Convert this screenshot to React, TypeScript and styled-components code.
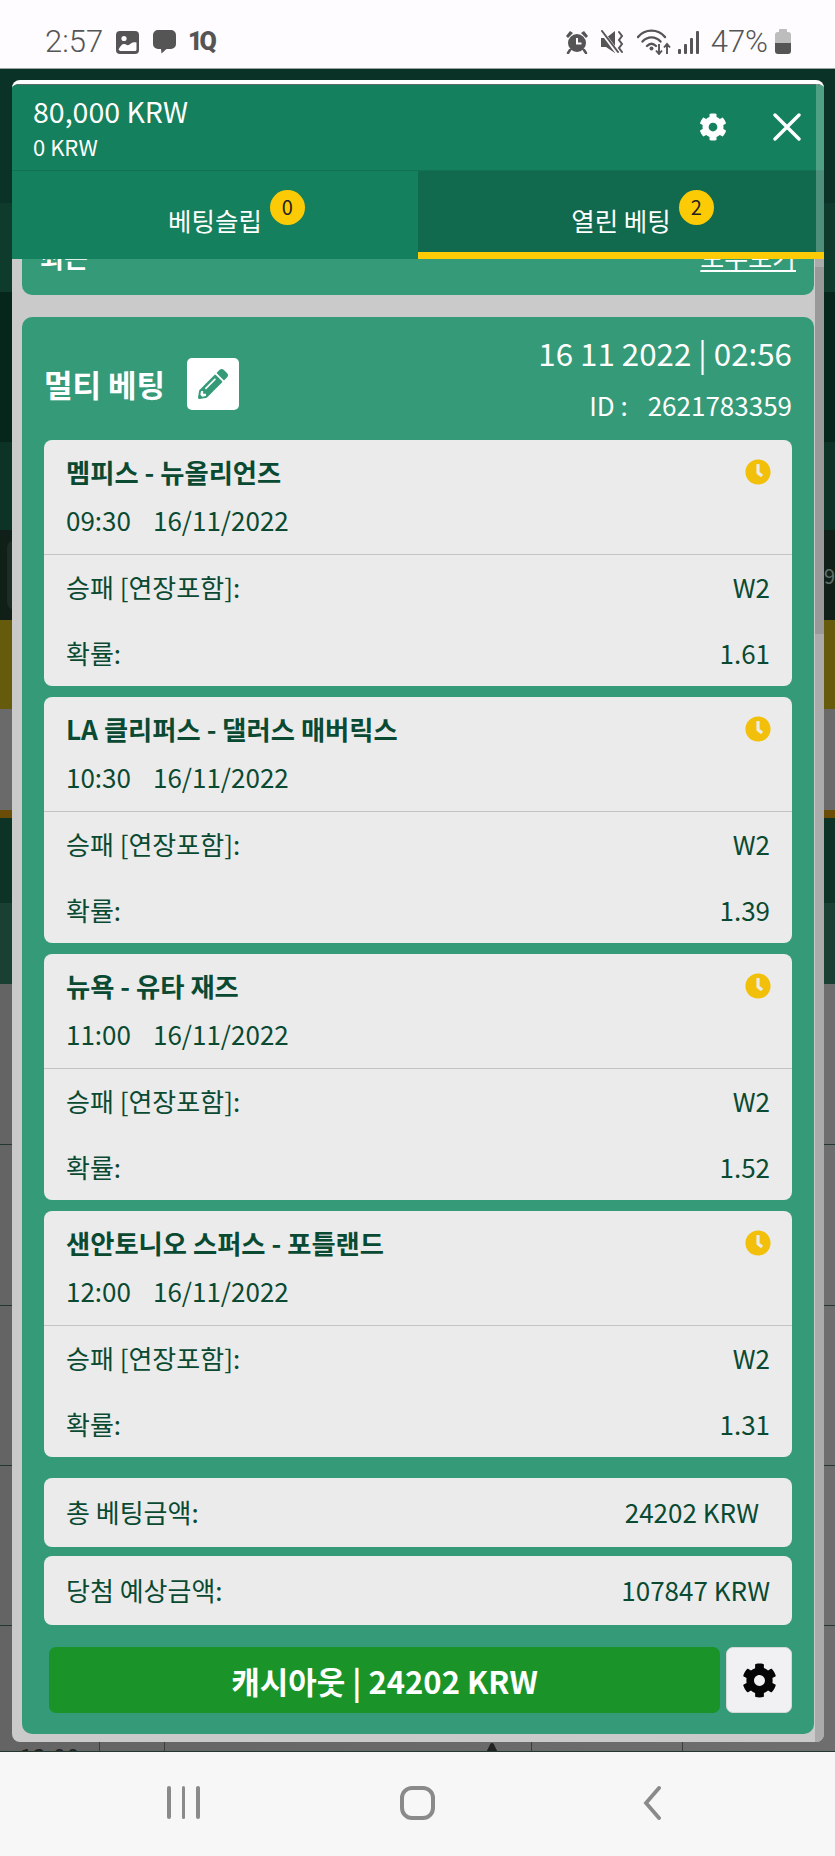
import React from "react";
import styled, { createGlobalStyle } from "styled-components";
import { FaClock, FaCog, FaPencilAlt, FaStar } from "react-icons/fa";

const FONT = `"Noto Sans CJK KR", "Noto Sans", sans-serif`;

const GlobalStyle = createGlobalStyle`
  html, body {
    margin: 0;
    padding: 0;
    background: #f7f7f7;
  }
  * {
    box-sizing: border-box;
  }
`;

const StPage = styled.div`
  display: flex;
  flex-direction: column;
  width: 835px;
  height: 1856px;
  overflow: hidden;
  font-family: ${FONT};
`;

/* status bar */
const StStatusBar = styled.div`
  display: flex;
  flex: 0 0 69px;
  align-items: center;
  justify-content: space-between;
  padding: 16px 44px 0 45px;
  border-bottom: 1px solid #9aa5a1;
  background: #fefcfe;
  color: #555555;
  font-family: Roboto, sans-serif;
`;

const StStatusGroup = styled.div`
  display: flex;
  align-items: center;
`;

const StClock = styled.span`
  margin-right: 13px;
  font-size: 31px;
  line-height: 30px;
  font-weight: 300;
`;

const StOneQ = styled.span`
  margin-left: 12px;
  font-size: 25px;
  line-height: 26px;
  font-weight: 900;
  letter-spacing: -3px;
`;

const StPercent = styled.span`
  margin: 0 7px 0 12px;
  font-size: 31px;
  line-height: 30px;
  font-weight: 300;
`;

const StBattery = styled.div`
  position: relative;
  width: 16px;
  height: 22px;
  margin-top: 2px;
  border-radius: 3px;
  background: linear-gradient(#bdbdbd 52%, #555555 52%);
  &::before {
    content: "";
    position: absolute;
    top: -3px;
    left: 4px;
    width: 8px;
    height: 3px;
    border-radius: 1px 1px 0 0;
    background: #bdbdbd;
  }
`;

/* page behind the modal */
const StStage = styled.div`
  position: relative;
  flex: 1;
`;

const StBand = styled.div<{ $h: number; $bg: string }>`
  display: flex;
  align-items: center;
  justify-content: space-between;
  height: ${({ $h }) => $h}px;
  background: ${({ $bg }) => $bg};
`;

const StGreyRow = styled.div<{ $h: number }>`
  display: flex;
  flex-direction: column;
  justify-content: flex-end;
  height: ${({ $h }) => $h}px;
  border-bottom: 1px solid #24382f;
  background: linear-gradient(90deg, #646464, #6e6e6e);
  &:last-child {
    border-bottom: none;
  }
`;

const StBehindPill = styled.div`
  width: 12px;
  height: 70px;
  margin-left: 7px;
  border-radius: 8px 0 0 8px;
  background: #1d2c25;
`;

const StBehindText = styled.span`
  color: #5d6f68;
  font-size: 20px;
`;

const StPeekRow = styled.div`
  display: flex;
  height: 10px;
  overflow: hidden;
  color: #222222;
  font-size: 24px;
  line-height: 30px;
`;

const StPeekCell = styled.div<{ $w: number; $end?: boolean }>`
  display: flex;
  justify-content: ${({ $end }) => ($end ? "flex-end" : "center")};
  width: ${({ $w }) => $w}px;
  padding-right: ${({ $end }) => ($end ? "22px" : "0")};
  border-right: 1px solid #3c3c3c;
`;

/* modal */
const StModal = styled.div`
  position: absolute;
  top: 11px;
  left: 12px;
  display: flex;
  flex-direction: column;
  width: 812px;
  height: 1662px;
  overflow: hidden;
  border-top: 4px solid #ffffff;
  border-radius: 8px;
  background: #cacaca;
`;

const StHeader = styled.div`
  display: flex;
  flex: 0 0 86px;
  align-items: center;
  justify-content: space-between;
  padding: 0 23px 0 21px;
  border-top: 1px solid #5b6b65;
  background: #15805d;
  color: #ffffff;
`;

const StBalance = styled.div`
  font-size: 28.5px;
  line-height: 38px;
  margin-top: -1px;
`;

const StBonus = styled.div`
  font-size: 22px;
  line-height: 32px;
`;

const StHeaderActions = styled.div`
  display: flex;
  align-items: center;
  gap: 46px;
  margin-top: -2px;
  font-size: 28px;
  line-height: 0;
`;

const StTabs = styled.div`
  display: flex;
  flex: 0 0 89px;
`;

const StTab = styled.div<{ $active?: boolean }>`
  display: flex;
  flex: 1;
  align-items: center;
  justify-content: center;
  padding-top: ${({ $active }) => ($active ? "15px" : "8px")};
  border-top: 1px solid #127055;
  border-bottom: ${({ $active }) => ($active ? "7px solid #fccb05" : "none")};
  background: ${({ $active }) => ($active ? "#126a4e" : "#15805d")};
  color: #ffffff;
  font-size: 25.5px;
`;

const StTabLabel = styled.span`
  position: relative;
`;

const StBadge = styled.span`
  position: absolute;
  top: -11px;
  right: -43px;
  display: flex;
  align-items: center;
  justify-content: center;
  width: 35px;
  height: 35px;
  border-radius: 50%;
  background: #fccb05;
  color: #222222;
  font-size: 20px;
  line-height: 1;
`;

const StHeaderTint = styled.div`
  position: absolute;
  top: 0;
  right: 0;
  width: 8px;
  height: 168px;
  background: rgba(255, 255, 255, 0.25);
`;

const StBody = styled.div`
  display: flex;
  flex: 1;
  min-height: 0;
`;

const StScroll = styled.div`
  flex: 1;
  padding: 0 1px 0 10px;
`;

const StRecent = styled.div`
  display: flex;
  align-items: flex-start;
  justify-content: space-between;
  height: 36px;
  overflow: hidden;
  padding: 0 18px;
  border-radius: 0 0 10px 10px;
  background: #359a78;
  color: #ffffff;
`;

const StRecentTitle = styled.span`
  margin-top: -21px;
  font-size: 26px;
  line-height: 38px;
  font-weight: 700;
`;

const StRecentLink = styled.span`
  margin-top: -21px;
  font-size: 26px;
  line-height: 38px;
  text-decoration: underline;
`;

const StScrollTrack = styled.div`
  flex: 0 0 9px;
  padding-top: 8px;
  background: #ababab;
`;

const StScrollThumb = styled.div`
  height: 367px;
  background: #999999;
`;

const StCoupon = styled.div`
  margin-top: 22px;
  padding: 0 22px 21px;
  border-radius: 10px;
  background: #359a78;
`;

const StCouponHead = styled.div`
  display: flex;
  align-items: center;
  justify-content: space-between;
  height: 123px;
  color: #ffffff;
`;

const StCouponTitle = styled.div`
  display: flex;
  align-items: center;
  gap: 22px;
  margin-top: 10px;
  font-size: 31px;
  font-weight: 700;
`;

const StEditButton = styled.div`
  display: flex;
  align-items: center;
  justify-content: center;
  width: 52px;
  height: 52px;
  border-radius: 5px;
  background: #ffffff;
  color: #359a78;
  font-size: 30px;
`;

const StCouponMeta = styled.div`
  display: flex;
  flex-direction: column;
  align-items: flex-end;
  gap: 9px;
`;

const StCouponDate = styled.div`
  font-size: 31.3px;
  line-height: 43px;
`;

const StCouponId = styled.div`
  display: flex;
  gap: 20px;
  font-size: 26px;
  line-height: 43px;
`;

const StBets = styled.div`
  display: flex;
  flex-direction: column;
  gap: 11px;
`;

const StBet = styled.div`
  border-radius: 8px;
  background: #ebebeb;
  color: #0a4a32;
`;

const StBetTop = styled.div`
  position: relative;
  height: 115px;
  padding: 11px 22px 0;
  border-bottom: 1px solid #c4c4c4;
`;

const StBetTeams = styled.div`
  font-size: 26.3px;
  line-height: 42px;
  font-weight: 700;
`;

const StBetTime = styled.div`
  display: flex;
  gap: 22px;
  margin-top: 6px;
  font-size: 26px;
  line-height: 42px;
`;

const StBetClock = styled.span`
  position: absolute;
  top: 19px;
  right: 21px;
  color: #f2c00a;
  font-size: 26px;
  line-height: 0;
`;

const StBetRows = styled.div`
  display: flex;
  flex-direction: column;
  gap: 24px;
  height: 131px;
  padding: 11px 22px 0;
`;

const StRow = styled.div`
  display: flex;
  justify-content: space-between;
  font-size: 26px;
  line-height: 42px;
`;

const StSummary = styled.div`
  display: flex;
  flex-direction: column;
  gap: 9px;
  margin-top: 21px;
`;

const StSummaryBox = styled.div`
  display: flex;
  align-items: center;
  justify-content: space-between;
  height: 69px;
  padding: 0 22px 2px;
  border-radius: 8px;
  background: #ebebeb;
  color: #0a4a32;
  font-size: 26px;
`;

const StSummaryValue = styled.span<{ $inset?: boolean }>`
  margin-right: ${({ $inset }) => ($inset ? "11px" : "0")};
`;

const StActions = styled.div`
  display: flex;
  gap: 6px;
  height: 66px;
  margin: 22px 0 0 5px;
`;

const StCashout = styled.div`
  display: flex;
  flex: 1;
  align-items: center;
  justify-content: center;
  border-radius: 7px;
  background: #1a9428;
  color: #ffffff;
  font-size: 31px;
  font-weight: 700;
`;

const StGearButton = styled.div`
  display: flex;
  flex: 0 0 66px;
  align-items: center;
  justify-content: center;
  border: 1px solid #d8d8d8;
  border-radius: 7px;
  background: #f1f1f4;
  color: #050505;
  font-size: 35px;
`;

/* nav bar */
const StNavBar = styled.div`
  display: grid;
  flex: 0 0 104px;
  grid-template-columns: repeat(3, 234px);
  align-items: center;
  justify-content: center;
  justify-items: center;
  padding-bottom: 3px;
  background: #f7f7f7;
`;

const StRecents = styled.div`
  display: flex;
  gap: 11px;
`;

const StRecentsBar = styled.span`
  width: 3.5px;
  height: 33px;
  border-radius: 2px;
  background: #8a8a8a;
`;

const StHome = styled.div`
  width: 35px;
  height: 34px;
  border: 4px solid #8a8a8a;
  border-radius: 12px;
`;

const bands = [
  { h: 134, bg: "#0a3226" },
  { h: 89, bg: "#0f3b2c" },
  { h: 150, bg: "#07261b" },
  { h: 88, bg: "#0c3325" },
];

const lowerBands = [
  { h: 89, bg: "#665a0c" },
  { h: 101, bg: "#6a6a6a" },
  { h: 8, bg: "#6a4e08" },
  { h: 85, bg: "#0c3325" },
  { h: 81, bg: "#1a4034" },
];

const bets = [
  { teams: "멤피스 - 뉴올리언즈", time: "09:30", odds: "1.61" },
  { teams: "LA 클리퍼스 - 댈러스 매버릭스", time: "10:30", odds: "1.39" },
  { teams: "뉴욕 - 유타 재즈", time: "11:00", odds: "1.52" },
  { teams: "샌안토니오 스퍼스 - 포틀랜드", time: "12:00", odds: "1.31" },
];

const PictureIcon = () => (
  <svg width="23" height="23" viewBox="0 0 23 23">
    <rect width="23" height="23" rx="4" fill="#555" />
    <circle cx="8" cy="7.5" r="2.6" fill="#fefcfe" />
    <path d="M2.5 18.5c2-4 4-6 6-5.5s3 2 5 .5 3-3 7-2v7a1.5 1.5 0 0 1-1.5 1.5H4z" fill="#fefcfe" />
  </svg>
);

const MessageIcon = () => (
  <svg width="23" height="24" viewBox="0 0 23 24" style={{ marginLeft: 14 }}>
    <path
      d="M5 0h13a5 5 0 0 1 5 5v9a5 5 0 0 1-5 5h-4.5L8.5 23.5 8 19H5a5 5 0 0 1-5-5V5a5 5 0 0 1 5-5z"
      fill="#555"
    />
  </svg>
);

const AlarmIcon = () => (
  <svg width="24" height="24" viewBox="0 0 24 24">
    <circle cx="12" cy="13" r="9" fill="#555" />
    <path d="M12 8v5.5h4.5" fill="none" stroke="#fefcfe" strokeWidth="2" />
    <path d="M1 6l4-5 3 2-5 5zM23 6l-4-5-3 2 5 5z" fill="#555" />
    <path d="M5 20l-2 3M19 20l2 3" stroke="#555" strokeWidth="2.5" strokeLinecap="round" />
  </svg>
);

const MuteVibrateIcon = () => (
  <svg width="24" height="24" viewBox="0 0 24 24" style={{ marginLeft: 12 }}>
    <path d="M0 8h5l9-7v22l-9-6H0z" fill="#555" />
    <path d="M1 2l15 20" stroke="#fefcfe" strokeWidth="4" />
    <path d="M1 1l16 21" stroke="#555" strokeWidth="2" strokeLinecap="round" />
    <path
      d="M18 2l3 4-3 4 3 4-3 4 3 4"
      fill="none"
      stroke="#555"
      strokeWidth="2"
      strokeLinecap="round"
    />
  </svg>
);

const WifiIcon = () => (
  <svg width="34" height="26" viewBox="0 0 34 26" style={{ marginLeft: 12 }}>
    <g fill="none" stroke="#555" strokeWidth="2.4" strokeLinecap="round">
      <path d="M1 8c7-8.5 20-8.5 27 0" />
      <path d="M5.5 12.5c5-5.5 13-5.5 18 0" />
      <path d="M10 17c3-3 6-3 9 0" />
    </g>
    <circle cx="14.5" cy="19.5" r="2" fill="#555" />
    <path
      d="M22 15v10M19 21.5l3 3.5 3-3.5M30 25V15M27 18.5l3-3.5 3 3.5"
      fill="none"
      stroke="#555"
      strokeWidth="1.9"
    />
  </svg>
);

const SignalIcon = () => (
  <svg width="21" height="23" viewBox="0 0 21 23" style={{ marginLeft: 7 }}>
    <rect x="0" y="18" width="3" height="5" rx="1" fill="#555" />
    <rect x="6" y="13" width="3" height="10" rx="1" fill="#555" />
    <rect x="12" y="7" width="3" height="16" rx="1" fill="#555" />
    <rect x="18" y="0" width="3" height="23" rx="1" fill="#555" />
  </svg>
);

const CloseIcon = () => (
  <svg width="28" height="28" viewBox="0 0 28 28">
    <path d="M2 2l24 24M26 2L2 26" stroke="#fff" strokeWidth="3.4" strokeLinecap="round" />
  </svg>
);

const BackIcon = () => (
  <svg width="18" height="34" viewBox="0 0 18 34">
    <path d="M16 2L3 17l13 15" fill="none" stroke="#8a8a8a" strokeWidth="3.8" strokeLinecap="round" />
  </svg>
);

const App = () => {
  return (
    <StPage>
      <GlobalStyle />
      <StStatusBar>
        <StStatusGroup>
          <StClock>2:57</StClock>
          <PictureIcon />
          <MessageIcon />
          <StOneQ>1Q</StOneQ>
        </StStatusGroup>
        <StStatusGroup>
          <AlarmIcon />
          <MuteVibrateIcon />
          <WifiIcon />
          <SignalIcon />
          <StPercent>47%</StPercent>
          <StBattery />
        </StStatusGroup>
      </StStatusBar>

      <StStage>
        {bands.map((band, i) => (
          <StBand key={i} $h={band.h} $bg={band.bg} />
        ))}
        <StBand $h={90} $bg="#102018">
          <StBehindPill />
          <StBehindText>4.9</StBehindText>
        </StBand>
        {lowerBands.map((band, i) => (
          <StBand key={i} $h={band.h} $bg={band.bg} />
        ))}
        <StGreyRow $h={161} />
        <StGreyRow $h={161} />
        <StGreyRow $h={160} />
        <StGreyRow $h={160} />
        <StGreyRow $h={126}>
          <StPeekRow>
            <StPeekCell $w={100}>12:00</StPeekCell>
            <StPeekCell $w={65} />
            <StPeekCell $w={367} $end>
              <FaStar size={34} />
            </StPeekCell>
            <StPeekCell $w={151} />
          </StPeekRow>
        </StGreyRow>

        <StModal>
          <StHeader>
            <div>
              <StBalance>80,000 KRW</StBalance>
              <StBonus>0 KRW</StBonus>
            </div>
            <StHeaderActions>
              <FaCog />
              <CloseIcon />
            </StHeaderActions>
          </StHeader>
          <StTabs>
            <StTab>
              <StTabLabel>
                베팅슬립
                <StBadge>0</StBadge>
              </StTabLabel>
            </StTab>
            <StTab $active>
              <StTabLabel>
                열린 베팅
                <StBadge>2</StBadge>
              </StTabLabel>
            </StTab>
          </StTabs>
          <StHeaderTint />
          <StBody>
            <StScroll>
              <StRecent>
                <StRecentTitle>최근</StRecentTitle>
                <StRecentLink>모두보기</StRecentLink>
              </StRecent>
              <StCoupon>
                <StCouponHead>
                  <StCouponTitle>
                    멀티 베팅
                    <StEditButton>
                      <FaPencilAlt />
                    </StEditButton>
                  </StCouponTitle>
                  <StCouponMeta>
                    <StCouponDate>16 11 2022 | 02:56</StCouponDate>
                    <StCouponId>
                      <span>ID :</span>
                      <span>2621783359</span>
                    </StCouponId>
                  </StCouponMeta>
                </StCouponHead>
                <StBets>
                  {bets.map((bet) => (
                    <StBet key={bet.teams}>
                      <StBetTop>
                        <StBetTeams>{bet.teams}</StBetTeams>
                        <StBetTime>
                          <span>{bet.time}</span>
                          <span>16/11/2022</span>
                        </StBetTime>
                        <StBetClock>
                          <FaClock />
                        </StBetClock>
                      </StBetTop>
                      <StBetRows>
                        <StRow>
                          <span>승패 [연장포함]:</span>
                          <span>W2</span>
                        </StRow>
                        <StRow>
                          <span>확률:</span>
                          <span>{bet.odds}</span>
                        </StRow>
                      </StBetRows>
                    </StBet>
                  ))}
                </StBets>
                <StSummary>
                  <StSummaryBox>
                    <span>총 베팅금액:</span>
                    <StSummaryValue $inset>24202 KRW</StSummaryValue>
                  </StSummaryBox>
                  <StSummaryBox>
                    <span>당첨 예상금액:</span>
                    <StSummaryValue>107847 KRW</StSummaryValue>
                  </StSummaryBox>
                </StSummary>
                <StActions>
                  <StCashout>캐시아웃 | 24202 KRW</StCashout>
                  <StGearButton>
                    <FaCog />
                  </StGearButton>
                </StActions>
              </StCoupon>
            </StScroll>
            <StScrollTrack>
              <StScrollThumb />
            </StScrollTrack>
          </StBody>
        </StModal>
      </StStage>

      <StNavBar>
        <StRecents>
          <StRecentsBar />
          <StRecentsBar />
          <StRecentsBar />
        </StRecents>
        <StHome />
        <BackIcon />
      </StNavBar>
    </StPage>
  );
};

export default App;
